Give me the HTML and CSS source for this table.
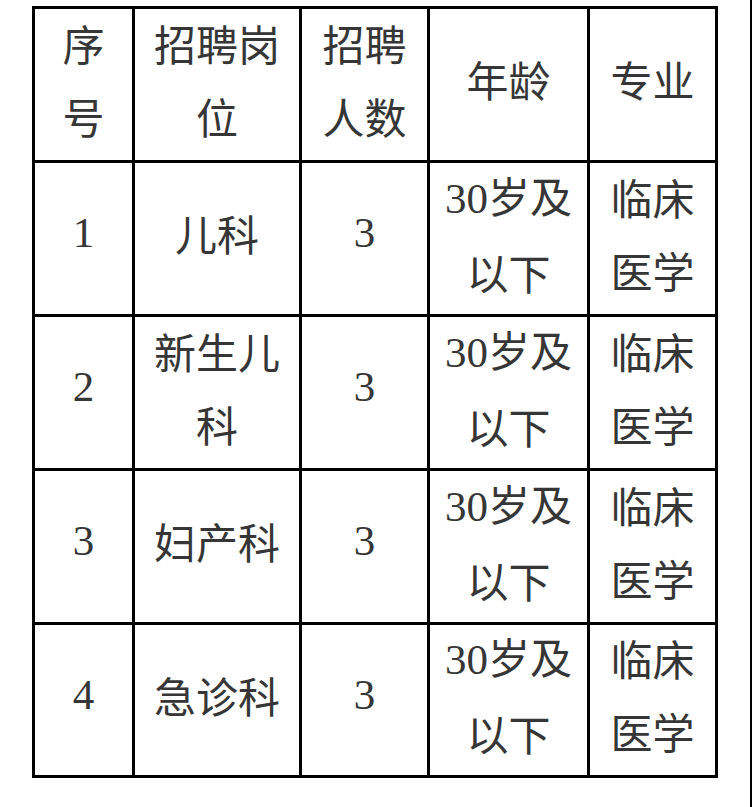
FILE: index.html
```html
<!DOCTYPE html>
<html lang="zh-CN">
<head>
<meta charset="utf-8">
<title>招聘岗位</title>
<link rel="stylesheet" href="styles.css">
</head>
<body>
<div class="page">
  <div class="table">
    <div class="cell"><p class="txt">序<br>号</p></div>
    <div class="cell"><p class="txt">招聘岗<br>位</p></div>
    <div class="cell"><p class="txt">招聘<br>人数</p></div>
    <div class="cell"><p class="txt">年龄</p></div>
    <div class="cell"><p class="txt">专业</p></div>

    <div class="cell"><p class="txt num">1</p></div>
    <div class="cell"><p class="txt">儿科</p></div>
    <div class="cell"><p class="txt num">3</p></div>
    <div class="cell"><p class="txt"><span class="num">30</span>岁及<br>以下</p></div>
    <div class="cell"><p class="txt">临床<br>医学</p></div>

    <div class="cell"><p class="txt num">2</p></div>
    <div class="cell"><p class="txt">新生儿<br>科</p></div>
    <div class="cell"><p class="txt num">3</p></div>
    <div class="cell"><p class="txt"><span class="num">30</span>岁及<br>以下</p></div>
    <div class="cell"><p class="txt">临床<br>医学</p></div>

    <div class="cell"><p class="txt num">3</p></div>
    <div class="cell"><p class="txt">妇产科</p></div>
    <div class="cell"><p class="txt num">3</p></div>
    <div class="cell"><p class="txt"><span class="num">30</span>岁及<br>以下</p></div>
    <div class="cell"><p class="txt">临床<br>医学</p></div>

    <div class="cell"><p class="txt num">4</p></div>
    <div class="cell"><p class="txt">急诊科</p></div>
    <div class="cell"><p class="txt num">3</p></div>
    <div class="cell"><p class="txt"><span class="num">30</span>岁及<br>以下</p></div>
    <div class="cell"><p class="txt">临床<br>医学</p></div>
  </div>
</div>
</body>
</html>
```

FILE: styles.css
```css
html, body {
  margin: 0;
  padding: 0;
  background: #fff;
}

.page {
  box-sizing: border-box;
  width: 752px;
  height: 807px;
  padding: 6px 0 0 32px;
  border-right: 2px solid #000;
  font-family: "Noto Sans CJK SC", "Noto Sans", sans-serif;
  color: #363636;
}

.table {
  display: grid;
  grid-template-columns: 97px 164px 125px 157px 125px;
  grid-template-rows: 151px 151px 151px 151px 150px;
  gap: 3px;
  padding: 3px;
  width: max-content;
  background: #000;
}

.cell {
  background: #fff;
  display: flex;
  align-items: center;
  justify-content: center;
  padding-bottom: 12px;
  box-sizing: border-box;
}

.txt {
  margin: 0;
  text-align: center;
  font-size: 42px;
  line-height: 73px;
}

.num {
  font-family: "Liberation Serif", "Times New Roman", serif;
  font-size: 43px;
}
```
